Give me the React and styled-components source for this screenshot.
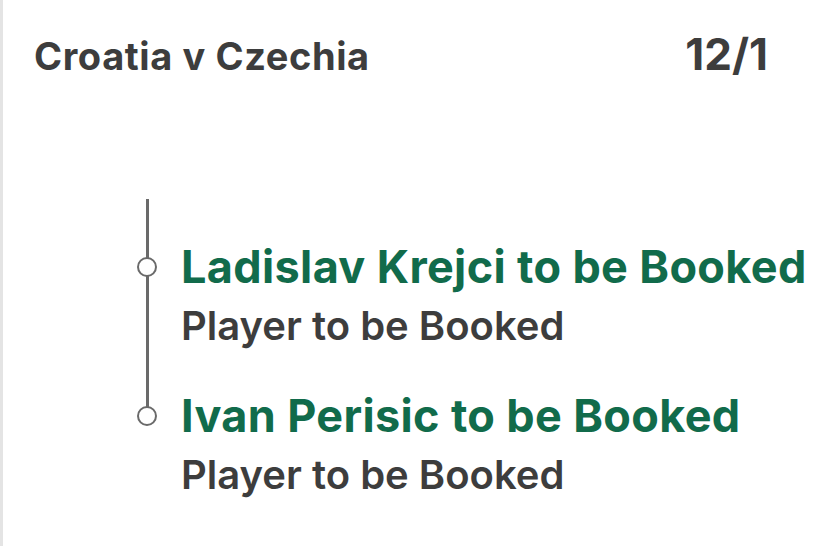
import React from 'react';
import styled, { createGlobalStyle } from 'styled-components';

const GlobalStyle = createGlobalStyle`
  html, body {
    margin: 0;
    padding: 0;
    background: #ffffff;
  }
  body {
    font-family: Inter, "Noto Sans", "Liberation Sans", sans-serif;
    -webkit-font-smoothing: antialiased;
  }
`;

const Page = styled.div`
  width: 826px;
  height: 546px;
  box-sizing: border-box;
  border-left: 3px solid #e4e4e4;
  background: #fff;
  overflow: hidden;
`;

const Header = styled.div`
  display: flex;
  justify-content: space-between;
  align-items: baseline;
  padding: 32px 58px 0 31px;
`;

const MatchName = styled.div`
  font-size: 38px;
  font-weight: 700;
  letter-spacing: 0.6px;
  line-height: 44px;
  color: #3d3d3d;
`;

const Odds = styled.div`
  font-size: 44px;
  font-weight: 700;
  line-height: 44px;
  color: #3d3d3d;
`;

const Timeline = styled.div`
  position: relative;
  margin: 121px 0 0 134px;
  padding-top: 41px;
  display: flex;
  flex-direction: column;
  gap: 39px;

  &::before {
    content: '';
    position: absolute;
    left: 9px;
    top: 0;
    width: 2.5px;
    height: 208px;
    background: #6a6a6a;
  }
`;

const Selection = styled.div`
  display: flex;
  align-items: flex-start;
  gap: 24px;
`;

const MarkerSlot = styled.div`
  position: relative;
  flex: 0 0 20px;
  height: 54px;
  display: flex;
  align-items: center;
`;

const Marker = styled.span`
  width: 20px;
  height: 20px;
  box-sizing: border-box;
  border: 2.5px solid #6a6a6a;
  border-radius: 50%;
  background: #fff;
  position: relative;
  z-index: 1;
`;

const Texts = styled.div`
  display: flex;
  flex-direction: column;
  gap: 8px;
`;

const Title = styled.div`
  font-size: 45px;
  font-weight: 700;
  letter-spacing: 0.35px;
  line-height: 54px;
  color: #116b4b;
  white-space: nowrap;
`;

const Market = styled.div`
  font-size: 40px;
  font-weight: 600;
  line-height: 48px;
  color: #3d3d3d;
  white-space: nowrap;
`;

const selections = [
  { id: 1, name: 'Ladislav Krejci to be Booked', market: 'Player to be Booked' },
  { id: 2, name: 'Ivan Perisic to be Booked', market: 'Player to be Booked' },
];

const App = () => {
  return (
    <>
      <GlobalStyle />
      <Page>
        <Header>
          <MatchName>Croatia v Czechia</MatchName>
          <Odds>12/1</Odds>
        </Header>
        <Timeline>
          {selections.map(sel => (
            <Selection key={sel.id}>
              <MarkerSlot>
                <Marker />
              </MarkerSlot>
              <Texts>
                <Title>{sel.name}</Title>
                <Market>{sel.market}</Market>
              </Texts>
            </Selection>
          ))}
        </Timeline>
      </Page>
    </>
  );
};

export default App;
